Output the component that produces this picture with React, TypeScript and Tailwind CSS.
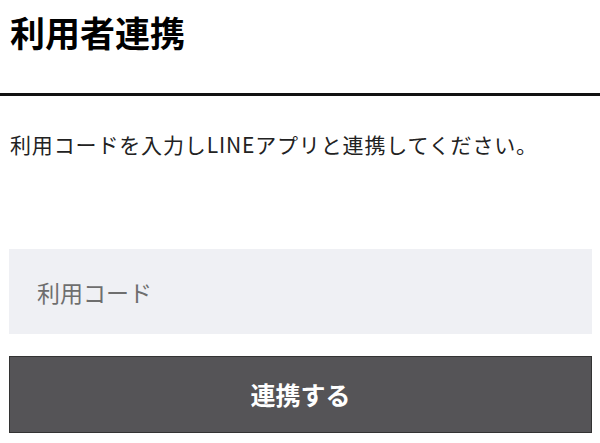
import React from "react";

export default function App() {
  return (
    <div className="w-[600px] h-[443px] bg-white overflow-hidden text-black font-['Noto_Sans_CJK_JP','Noto_Sans',sans-serif]">
      <div className="h-[96px] border-b-[3px] border-[#111] px-[10px] pt-[14px]">
        <h1 className="text-[35px] leading-[35px] font-bold">利用者連携</h1>
      </div>
      <p className="mt-[38px] px-[10px] text-[21px] leading-[21px] tracking-[0.85px] text-[#222]">
        利用コードを入力しLINEアプリと連携してください。
      </p>
      <div className="mt-[94px] mx-[9px] w-[583px] flex flex-col">
        <input
          type="text"
          placeholder="利用コード"
          className="h-[85px] w-full bg-[#eff0f4] px-[28px] text-[23px] outline-none placeholder:text-[#6e6e6e] font-['Noto_Sans_CJK_JP',sans-serif]"
        />
        <button className="mt-[22px] h-[77px] w-full bg-[#555457] border border-[#333] text-white text-[25px] font-bold font-['Noto_Sans_CJK_JP',sans-serif]">
          連携する
        </button>
      </div>
    </div>
  );
}
